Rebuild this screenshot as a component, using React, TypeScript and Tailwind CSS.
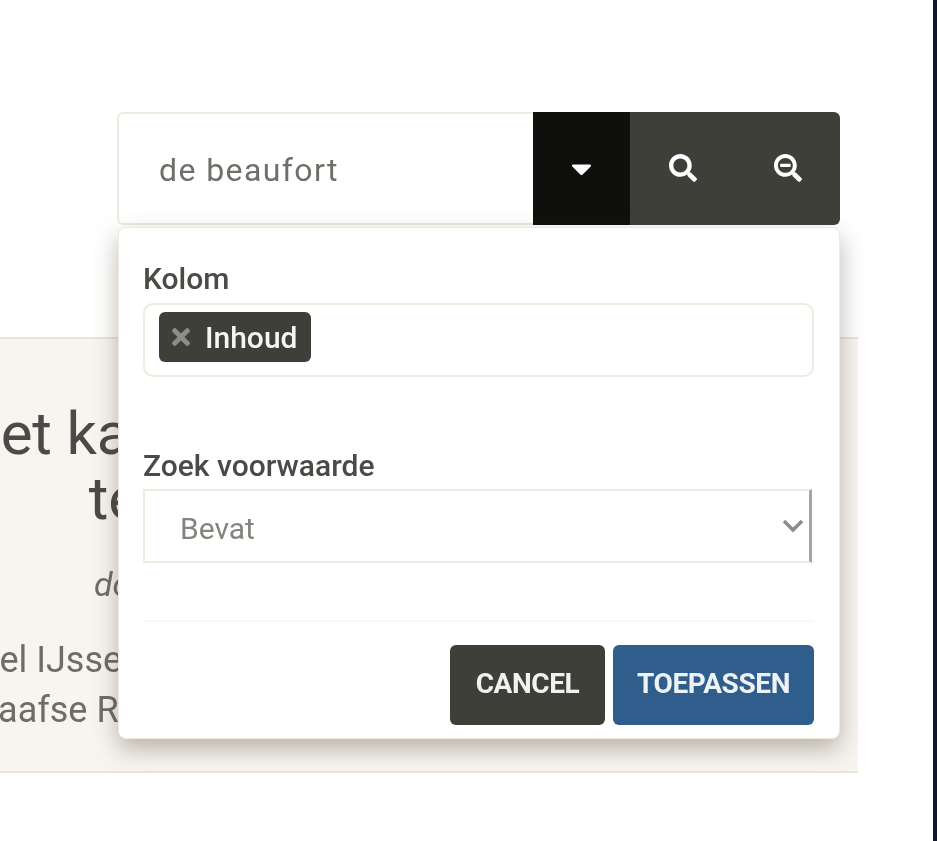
import React from "react";
import { FaCaretDown, FaSearch, FaSearchMinus, FaTimes } from "react-icons/fa";

export default function App() {
  return (
    <div className="relative flex h-[841px] w-[937px] overflow-hidden bg-white font-['Roboto',sans-serif] blur-[0.5px]">
      <main className="relative w-[858px] shrink-0 pt-[112px]">
        <div className="relative z-10 ml-[117px] flex h-[113px] w-[723px]">
          <div className="flex w-[416px] items-center rounded-l-[6px] border-2 border-r-0 border-[#efe9e0] bg-white pl-[40px] pt-[2px] text-[32px] tracking-[1.4px] text-[#6f6f6a]">
            de beaufort
          </div>
          <button className="flex w-[97px] items-center justify-center bg-[#0f0f0d] text-[33px] text-white">
            <FaCaretDown />
          </button>
          <div className="flex flex-1 rounded-r-[6px] bg-[#3f3f3a] pb-[2px] text-white">
            <button className="flex w-[105px] items-center justify-center text-[28px]">
              <FaSearch />
            </button>
            <button className="flex w-[105px] items-center justify-center text-[28px]">
              <FaSearchMinus />
            </button>
          </div>
          <div className="absolute left-[1px] top-[115px] flex h-[512px] w-[722px] flex-col rounded-[8px] border border-[#efe9e0] bg-white pl-[24px] pr-[25px] shadow-[0_10px_24px_rgba(70,60,40,0.36)]">
            <label className="mt-[33px] text-[30px] font-medium leading-[36px] text-[#4a4a46]">Kolom</label>
            <div className="mt-[6px] flex h-[74px] items-start rounded-[10px] border-2 border-[#efe9e0] pl-[14px] pt-[7px]">
              <span className="flex h-[50px] items-center gap-[11px] rounded-[6px] bg-[#3f3f3a] pl-[9px] pr-[14px] text-[30px] font-medium text-[#f4f4f2]">
                <FaTimes className="text-[26px] text-[#8d8d88]" />
                Inhoud
              </span>
            </div>
            <label className="mt-[71px] text-[30px] font-medium leading-[36px] text-[#4a4a46]">Zoek voorwaarde</label>
            <div className="mr-[2px] mt-[5px] flex h-[74px] items-center justify-between border-2 border-r-[3px] border-[#efe9e0] border-r-[#a5a5a2] pl-[35px] pr-[5px] text-[30px] text-[#85857f]">
              <span className="pt-[4px]">Bevat</span>
              <svg width="22" height="14" viewBox="0 0 22 14" fill="none" stroke="#8c8c88" strokeWidth="3.5">
                <path d="M2 2l9 9 9-9" />
              </svg>
            </div>
            <div className="mt-[57px] h-[2px] bg-[#faf8f5]" />
            <div className="mt-[23px] flex justify-end gap-[8px]">
              <button className="h-[80px] w-[155px] rounded-[6px] bg-[#3f3f3a] pb-[3px] text-[28px] font-bold tracking-[-0.4px] text-[#f1f1ef]">CANCEL</button>
              <button className="h-[80px] w-[201px] rounded-[6px] bg-[#2f5d8c] pb-[3px] text-[28px] font-bold tracking-[-0.4px] text-[#eef2f6]">TOEPASSEN</button>
            </div>
          </div>
        </div>
        <section className="mt-[112px] flex h-[436px] w-[858px] flex-col items-center overflow-hidden border-y-2 border-[#e9e3d9] bg-[#f8f5f0] pr-[58px]">
          <h1 className="mt-[62px] whitespace-nowrap text-[60px] leading-[65px] tracking-[-0.15px] text-[#4a4a46]">Het kaartboek van ons Nederland</h1>
          <h2 className="whitespace-nowrap text-[60px] leading-[65px] text-[#4a4a46]">te water en op het land.</h2>
          <p className="mt-[28px] whitespace-nowrap text-[34px] italic leading-[50px] text-[#6d6d68]">door Johann de Beaufort en vele anderen.</p>
          <p className="mt-[26px] whitespace-nowrap text-[36px] leading-[50px] text-[#6d6d68]">Wel IJsselstein en de streek van de stad aan het water</p>
          <p className="whitespace-nowrap text-[36px] leading-[50px] text-[#6d6d68]">Graafse Raam en de omgeving van de stad bij de Maas</p>
        </section>
      </main>
      <div className="ml-auto w-[4px] bg-[#0f172a]" />
    </div>
  );
}
